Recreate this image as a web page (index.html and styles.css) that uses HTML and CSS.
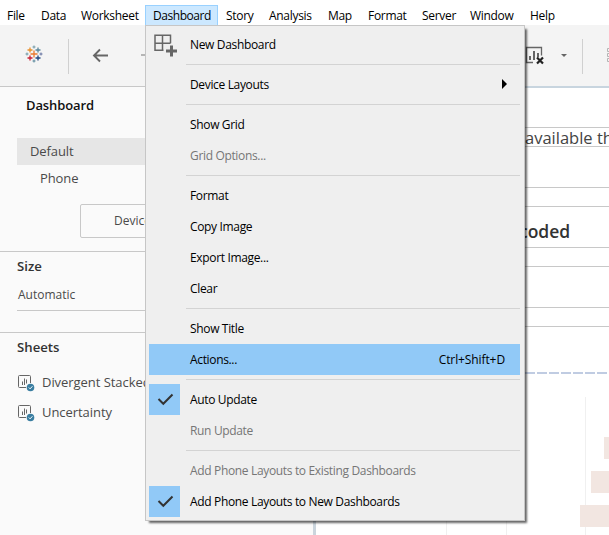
FILE: index.html
```html
<!DOCTYPE html>
<html lang="en">
<head>
<meta charset="utf-8">
<title>Dashboard</title>
<link rel="stylesheet" href="styles.css">
</head>
<body>
<nav class="menubar">
  <span>File</span><span>Data</span><span>Worksheet</span><span class="open">Dashboard</span><span>Story</span><span>Analysis</span><span>Map</span><span>Format</span><span>Server</span><span>Window</span><span>Help</span>
</nav>
<header class="toolbar">
  <svg class="logo" width="18" height="18" viewBox="0 0 18 18" fill="none" stroke-width="1.3">
    <path stroke="#eb7a2e" d="M9 5.500v7M5.500 9h7"/>
    <path stroke="#e8912d" d="M5 2.500v5M2.500 5h5"/>
    <path stroke="#5b879b" d="M13 2.500v5M10.500 5h5"/>
    <path stroke="#c72035" d="M5 10.500v5M2.500 13h5"/>
    <path stroke="#1f457e" d="M13 10.500v5M10.500 13h5"/>
    <path stroke="#7099a6" stroke-width="1" d="M9 .5v3M7.500 2h3M2 7.500v3M.5 9h3"/>
    <path stroke="#59879b" stroke-width="1" d="M9 14.500v3M7.500 16h3"/>
    <path stroke="#6572a0" stroke-width="1" d="M16 7.500v3M14.500 9h3"/>
  </svg>
  <i class="divider"></i>
  <svg class="back" width="17" height="15" viewBox="0 0 17 15" fill="none" stroke="#666" stroke-width="1.9"><path d="M16 7.500H2M8 1.500l-6 6 6 6"/></svg>
  <i class="forward"></i>
  <svg class="clear" width="21" height="20" viewBox="0 0 21 20" fill="none" stroke="#666">
    <path stroke-width="1.3" d="M9 16.500H2.500V1.500h15v8"/>
    <path stroke-width="2" d="M6 14v-4M10 14V5M14 11V7"/>
    <path stroke="#222" stroke-width="2.200" d="M13 11.500l6 6M19 11.500l-6 6"/>
  </svg>
  <i class="caret"></i>
  <i class="divider last"></i>
  <svg class="more" width="5" height="16" viewBox="0 0 5 16" fill="none" stroke="#b5b5b5"><path d="M6 1.500H1.500v3H6M6 6.500H1.500v3H6M6 11.500H1.500v3H6"/></svg>
</header>
<main class="workspace">
  <aside class="sidebar">
    <section class="devices">
      <h2>Dashboard</h2>
      <div class="device selected">Default</div>
      <div class="device phone">Phone</div>
      <div class="preview">Device Preview</div>
    </section>
    <section class="size">
      <h2>Size</h2>
      <div class="select">Automatic</div>
    </section>
    <section class="sheets">
      <h2>Sheets</h2>
      <div class="sheet">
        <svg width="17" height="17" viewBox="0 0 17 17" fill="none"><path stroke="#666" d="M8 12.500H1.500a1 1 0 0 1-1-1v-10a1 1 0 0 1 1-1h10a1 1 0 0 1 1 1V8M4.500 10V6.500M6.500 10V3.500M8.500 8.500v-4"/><circle cx="12.500" cy="12.500" r="3.800" fill="#3a7ea1"/><path stroke="#fff" d="M10.800 12.500l1.300 1.300 2.300-2.500"/></svg>
        <span>Divergent Stacked Bar</span>
      </div>
      <div class="sheet">
        <svg width="17" height="17" viewBox="0 0 17 17" fill="none"><path stroke="#666" d="M8 12.500H1.500a1 1 0 0 1-1-1v-10a1 1 0 0 1 1-1h10a1 1 0 0 1 1 1V8M4.500 10V6.500M6.500 10V3.500M8.500 8.500v-4"/><circle cx="12.500" cy="12.500" r="3.800" fill="#3a7ea1"/><path stroke="#fff" d="M10.800 12.500l1.300 1.300 2.300-2.500"/></svg>
        <span>Uncertainty</span>
      </div>
    </section>
  </aside>
  <section class="canvas">
    <div class="band intro">available th</div>
    <div class="gap"></div>
    <div class="band"></div>
    <div class="gap heading">coded</div>
    <div class="band"></div>
    <div class="gap"></div>
    <div class="band"></div>
    <svg class="chart" width="293" height="208" viewBox="316 327 293 208">
      <path stroke="#c0cce2" stroke-width="2" stroke-dasharray="10 2" d="M321 373H607"/>
      <path stroke="#f0f0f0" d="M446.500 397V535M506.500 397V535M585.500 397V535"/>
      <path fill="#f2e6e1" d="M604 437h5v22h-5zM591 471h18v22h-18zM580 505h29v22h-29z"/>
    </svg>
  </section>
</main>
<div class="menu">
  <div class="item"><svg class="mark" width="31" height="31" viewBox="0 0 31 31" fill="none" stroke="#666"><path stroke-width="1.500" d="M14.500 21.300H6V6.300h15.500v8M6 14.200h15.500M13.500 6.300v15"/><path stroke-width="3" d="M22.500 16.500v11M17 22h11"/></svg><span>New Dashboard</span></div>
  <hr>
  <div class="item"><span>Device Layouts</span><i class="submenu"></i></div>
  <hr>
  <div class="item"><span>Show Grid</span></div>
  <div class="item off"><span>Grid Options...</span></div>
  <hr>
  <div class="item"><span>Format</span></div>
  <div class="item"><span>Copy Image</span></div>
  <div class="item"><span>Export Image...</span></div>
  <div class="item"><span>Clear</span></div>
  <hr>
  <div class="item"><span>Show Title</span></div>
  <div class="item active"><span>Actions...</span><kbd>Ctrl+Shift+D</kbd></div>
  <hr>
  <div class="item"><svg class="mark check" width="31" height="31" viewBox="0 0 31 31" fill="none" stroke="#333" stroke-width="2"><path d="M9.500 15l4.800 4.800L23.500 10.500"/></svg><span>Auto Update</span></div>
  <div class="item off"><span>Run Update</span></div>
  <hr>
  <div class="item off"><span>Add Phone Layouts to Existing Dashboards</span></div>
  <div class="item"><svg class="mark check" width="31" height="31" viewBox="0 0 31 31" fill="none" stroke="#333" stroke-width="2"><path d="M9.500 15l4.800 4.800L23.500 10.500"/></svg><span>Add Phone Layouts to New Dashboards</span></div>
</div>
</body>
</html>
```
FILE: styles.css
```css
* { box-sizing: border-box; }
body {
  margin: 0;
  width: 609px;
  height: 535px;
  overflow: hidden;
  position: relative;
  background: #fff;
  color: #000;
  font: 12px "Open Sans", "Noto Sans", sans-serif;
}
.menubar {
  display: grid;
  grid-template-columns: 34px 40px 72px 73px 43px 59px 40px 54px 48px 60px 50px;
  height: 25px;
  padding-top: 5px;
  margin-left: -1px;
  letter-spacing: -.3px;
}
.menubar span { padding-left: 8px; line-height: 22px; white-space: nowrap; }
.menubar .open { background: #cce8ff; border: 1px solid #99d1ff; padding-left: 7px; line-height: 20px; letter-spacing: -.45px; }
.toolbar {
  display: flex;
  align-items: center;
  height: 61px;
  padding-left: 25px;
  background: #f4f4f4;
}
.toolbar > * { flex: none; }
.logo { margin-top: -3px; }
.divider { width: 1px; height: 35px; margin: 2px 0 0 25px; background: #d0d0d0; }
.back { margin: -1px 0 0 23px; }
.forward { width: 9px; height: 2px; margin: -1px 0 0 32px; background: #b5b5b5; }
.clear { margin: 1px 0 0 374px; }
.caret { margin: 0 0 0 16px; border: 3px solid transparent; border-top-color: #666; border-bottom: 0; }
.divider.last { margin-left: 15px; }
.more { margin: -1px 0 0 23px; }
.workspace { display: grid; grid-template-columns: 316px 1fr; height: 449px; }
.sidebar {
  background: linear-gradient(#c8c8c8, #c8c8c8) 0 0 / 100% 1px no-repeat #fafafa;
  padding-top: 1px;
  border-right: 3px solid #cbd5dd;
  color: #4a4a4a;
}
h2 { margin: 0; font-size: 13.2px; line-height: 18px; font-weight: 600; color: #333; }
.devices { height: 165px; padding: 9px 0 0 17px; border-bottom: 1px solid #c8c8c8; }
.devices h2 { padding-left: 9px; color: #111; font-size: 13px; letter-spacing: -.1px; }
.device { height: 27px; line-height: 27px; padding-left: 13px; font-size: 13px; letter-spacing: -.1px; }
.selected { margin-top: 24px; background: #e6e6e6; }
.phone { padding-left: 23px; }
.preview { width: 150px; height: 34px; margin: 12px 0 0 63px; padding-left: 33px; line-height: 32px; border: 1px solid #c8c8c8; border-radius: 2px; }
.size { height: 81px; padding: 5px 0 0 17px; border-bottom: 1px solid #c8c8c8; }
.select { height: 31px; margin-top: 5px; padding-left: 1px; line-height: 30px; border-bottom: 1px solid #c8c8c8; }
.sheets { padding: 5px 0 0 17px; }
.sheets h2 { margin-bottom: 11px; }
.sheet { display: flex; align-items: center; gap: 7px; height: 30px; font-size: 13px; letter-spacing: -.05px; }
.sheet svg { margin: 3px 0 0 1px; }
.canvas { padding-top: 39px; background: #fff; border-top: 2px solid #c8d5df; }
.band { height: 20px; border: solid #c8c8c8; border-width: 1px 0; white-space: nowrap; }
.gap { height: 40px; }
.intro { padding-left: 209px; font-size: 16.5px; line-height: 20px; color: #444; }
.heading { padding: 5px 0 0 203px; font-size: 17.5px; line-height: 38px; font-weight: 600; color: #333; }
.chart { display: block; }
.menu {
  position: absolute;
  left: 145px;
  top: 25px;
  width: 380px;
  height: 496px;
  padding: 3px 4px 3px 3px;
  background: #efefef;
  border: 1px solid #c6c6c6;
  box-shadow: 3px 3px 2px -1px rgba(0, 0, 0, .6);
}
.item { display: grid; grid-template-columns: 41px 1fr auto; align-items: center; height: 31px; letter-spacing: -.34px; white-space: nowrap; }
.item span { grid-column: 2; }
.mark { grid-column: 1; grid-row: 1; }
.check, .active { background: #91c9f7; }
.off { color: #767676; }
kbd { font: inherit; margin-right: 15px; letter-spacing: -.1px; }
.submenu { margin: -1px 13px 0 0; border: 5px solid transparent; border-left-color: #000; border-right: 0; }
hr { height: 1px; margin: 4px 0 4px 37px; border: 0; background: #d3d3d3; }
```
